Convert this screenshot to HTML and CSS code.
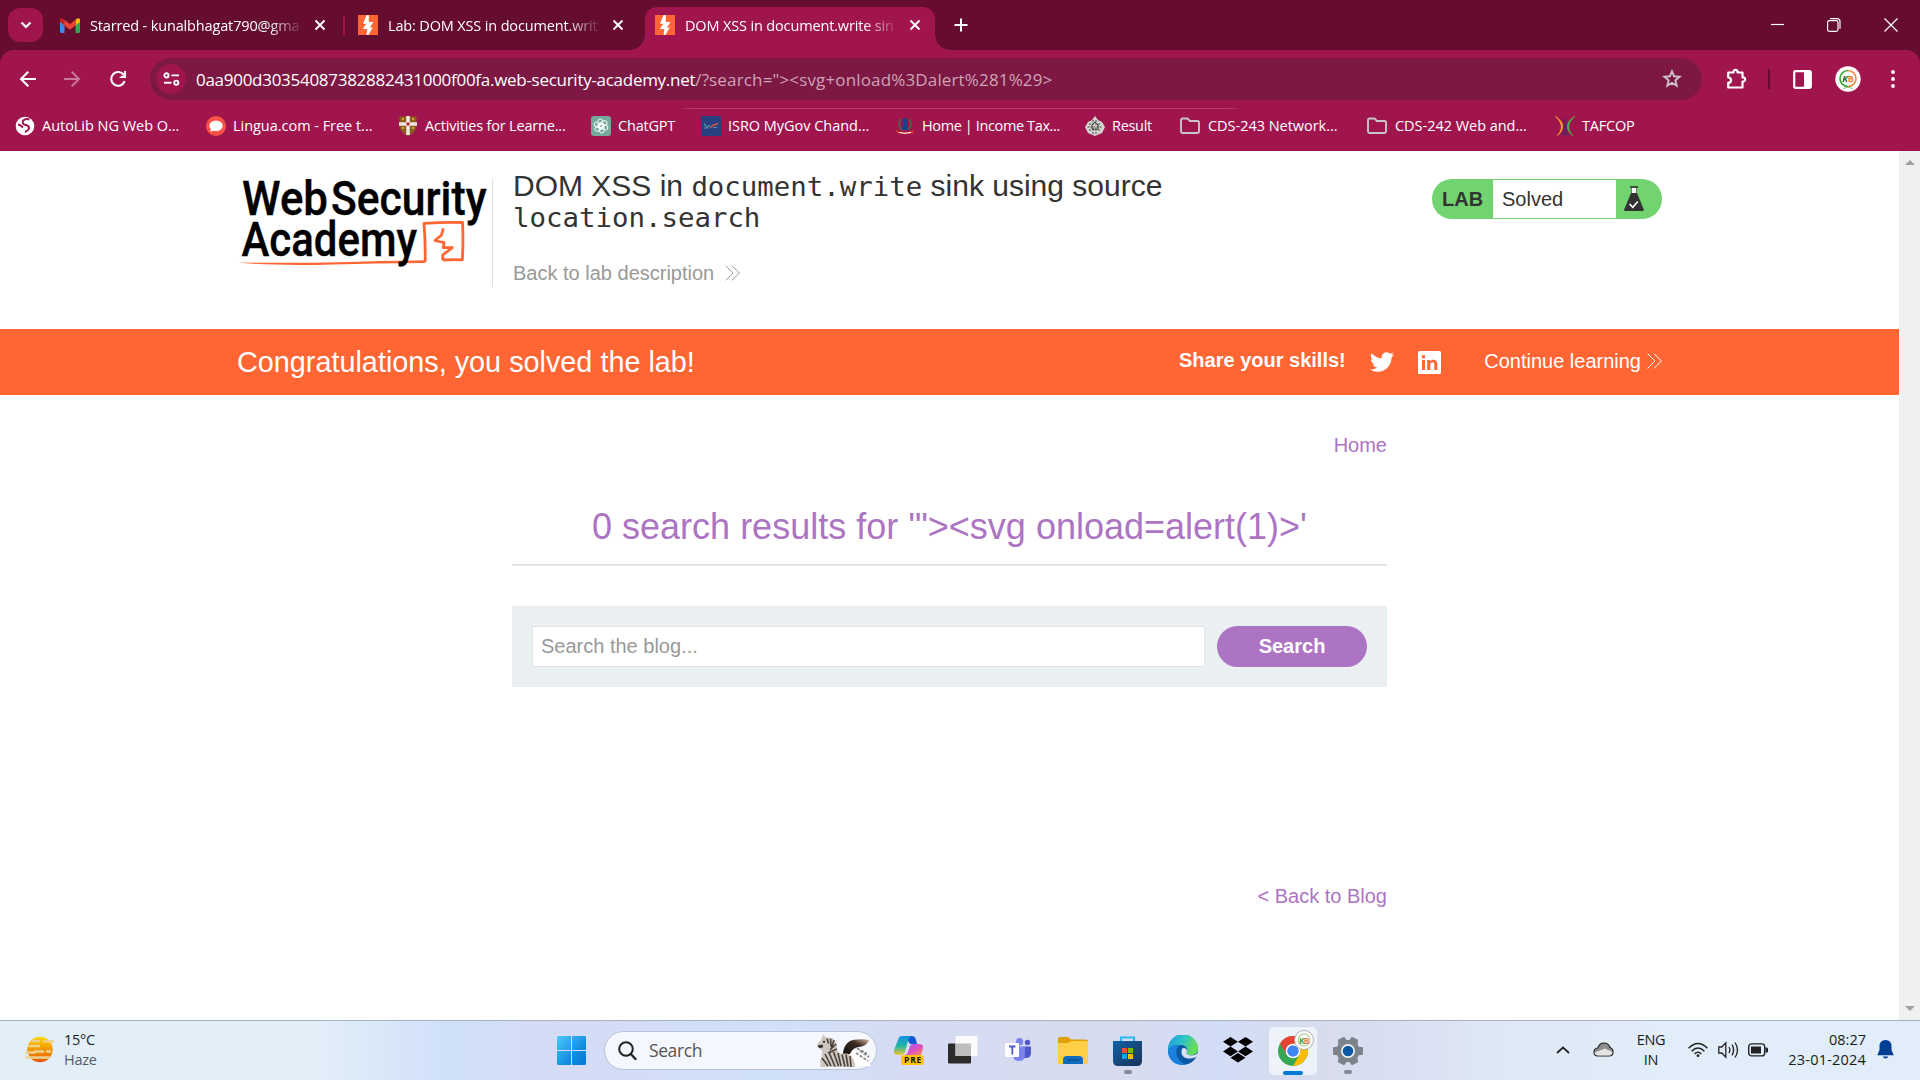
FILE: index.html
```html
<!DOCTYPE html>
<html lang="en">
<head>
<meta charset="utf-8">
<title>DOM XSS in document.write sink using source location.search</title>
<link rel="stylesheet" href="styles.css">
</head>
<body>
<svg class="defs" width="0" height="0" aria-hidden="true">
  <defs>
    <symbol id="close" viewBox="0 0 12 12"><path d="M1.5 1.5l9 9M10.500 1.5l-9 9" fill="none" stroke="#fff" stroke-width="1.900"/></symbol>
    <symbol id="burp" viewBox="0 0 20 20"><path fill="#ff6633" d="M0 0h20v20H0z"/><path fill="#fff" d="M8.600 0h2.200v7h4.700l-3.600 5.500h2.900L10.400 20H8.600l.7-6H4.700l3.700-5.300H5z"/></symbol>
    <symbol id="folder" viewBox="0 0 22 18"><path d="M2 3a1.500 1.500 0 0 1 1.500-1.500h5L11 4h7.500A1.500 1.500 0 0 1 20 5.500v9a1.500 1.500 0 0 1-1.500 1.500h-15A1.500 1.500 0 0 1 2 14.500z" fill="none" stroke="#c7c7c7" stroke-width="1.900"/></symbol>
    <symbol id="chevrons" viewBox="0 0 15 16"><path d="M.6.600L8 8 .6 15.400M7 .6L14.400 8 7 15.400" fill="none" stroke="currentColor" stroke-width="1"/></symbol>
  </defs>
</svg>

<header class="browser">
  <div class="tabstrip">
    <div class="tab-search"><svg width="12" height="8" viewBox="0 0 12 8"><path d="M1.500 1.500L6 6l4.500-4.500" fill="none" stroke="#fff" stroke-width="2.200"/></svg></div>
    <div class="tab tab-mail">
      <svg class="fav" width="20" height="15" viewBox="0 0 20 15"><path fill="#4285f4" d="M0 3h4.500v12H1.500A1.500 1.500 0 0 1 0 13.500z"/><path fill="#34a853" d="M15.500 3H20v10.500a1.500 1.500 0 0 1-1.500 1.500h-3z"/><path fill="#fbbc04" d="M15.500 1.500L18 .3c1.200-.3 2 .6 2 1.700v2l-4.500 3.500z"/><path fill="#c5221f" d="M0 4V2C0 .5 1.500-.2 2.800.6L4.500 2v5.500z"/><path fill="#ea4335" d="M4.500 1.800L10 6l5.500-4.200v5.700L10 11.700 4.500 7.500z"/></svg>
      <span class="tab-title">Starred - kunalbhagat790@gma</span>
      <svg class="x" width="12" height="12"><use href="#close"/></svg>
    </div>
    <i class="tab-sep"></i>
    <div class="tab tab-lab">
      <svg class="fav" width="20" height="20"><use href="#burp"/></svg>
      <span class="tab-title">Lab: DOM XSS in document.writ</span>
      <svg class="x" width="12" height="12"><use href="#close"/></svg>
    </div>
    <div class="tab tab-active">
      <svg class="fav" width="20" height="20"><use href="#burp"/></svg>
      <span class="tab-title">DOM XSS in document.write sin</span>
      <svg class="x" width="12" height="12"><use href="#close"/></svg>
    </div>
    <svg class="new-tab" width="14" height="14" viewBox="0 0 14 14"><path d="M7 .5v13M.5 7h13" stroke="#fff" stroke-width="2"/></svg>
    <div class="window-buttons">
      <svg width="14" height="14" viewBox="0 0 14 14"><path d="M1 6.500h13" stroke="#fff" stroke-width="1.200"/></svg>
      <svg width="14" height="14" viewBox="0 0 14 14"><rect x=".6" y="2.600" width="10.400" height="10.800" rx="1.800" fill="none" stroke="#fff" stroke-width="1.200"/><path d="M3 .7h7a3 3 0 0 1 3 3v7" fill="none" stroke="#fff" stroke-width="1.200"/></svg>
      <svg width="14" height="14" viewBox="0 0 14 14"><path d="M.5.500l13 13M13.500.5l-13 13" stroke="#fff" stroke-width="1.200"/></svg>
    </div>
  </div>

  <div class="toolbar">
    <svg class="nav-back" width="18" height="18" viewBox="0 0 18 18"><path d="M17 9H2.500M9.300 1.700L2 9l7.300 7.300" fill="none" stroke="#fff" stroke-width="2.100"/></svg>
    <svg class="nav-forward" width="18" height="18" viewBox="0 0 18 18"><path d="M1 9h14.500M8.700 1.700L16 9l-7.300 7.300" fill="none" stroke="#c7799b" stroke-width="2"/></svg>
    <svg class="nav-reload" width="18" height="18" viewBox="0 0 18 18"><path d="M15.600 11.200A6.900 6.900 0 1 1 15 5.300" fill="none" stroke="#fff" stroke-width="2.100"/><path d="M17 1v7h-7l2.500-2.200H15V1z" fill="#fff"/></svg>
    <div class="omnibox">
      <span class="site-info"><svg width="17" height="14" viewBox="0 0 17 14" fill="none" stroke="#fff" stroke-width="1.900"><circle cx="3.500" cy="3.400" r="2.100"/><path d="M8.500 3.400H16M1 10.700h7.500"/><circle cx="13.300" cy="10.700" r="2.100"/></svg></span>
      <span class="url"><span class="url-host">0aa900d30354087382882431000f00fa.web-security-academy.net</span><span class="url-path">/?search="&gt;&lt;svg+onload%3Dalert%281%29&gt;</span></span>
      <svg class="star" width="20" height="20" viewBox="0 0 20 20"><path d="M10 2.300l2.100 5 5.500.5-4.200 3.600 1.300 5.400-4.700-2.900-4.700 2.900 1.300-5.400-4.200-3.600 5.500-.5z" fill="none" stroke="#cfc0c8" stroke-width="1.900"/></svg>
    </div>
    <svg class="puzzle" width="22" height="22" viewBox="0 0 22 22"><path d="M2.200 4.500h5.300c-.5-3.500 4.500-3.500 4 0h5v5c3.500-.6 3.500 4.500 0 4v6H2.200v-4.700c3.800-.3 3.800-5 0-5.400z" fill="none" stroke="#fff" stroke-width="2.200" stroke-linejoin="round"/></svg>
    <i class="toolbar-sep"></i>
    <svg class="side-panel" width="19" height="19" viewBox="0 0 19 19"><rect x="1.200" y="1.200" width="16.600" height="16.600" rx="1.500" fill="none" stroke="#fff" stroke-width="2.200"/><path fill="#fff" d="M11 1h7v17h-7z"/></svg>
    <svg class="avatar" width="26" height="26" viewBox="0 0 26 26"><circle cx="13" cy="13" r="12.700" fill="#fff"/><path d="M13 4.500a8 8 0 0 0 0 16" fill="none" stroke="#3aa935" stroke-width="1.600"/><path d="M13 4.500a8 8 0 0 1 0 16" fill="none" stroke="#f08a3c" stroke-width="1.600"/><text x="7.200" y="16" font-size="9" font-weight="700" font-style="italic" fill="#176b3a">K</text><text x="12.800" y="16" font-size="9" font-weight="700" fill="#ef7f2d">B</text><path d="M8 23q5-3.500 10 0" fill="none" stroke="#8bc48a"/></svg>
    <svg class="kebab" width="4" height="20" viewBox="0 0 4 20" fill="#fff"><circle cx="2" cy="3" r="1.900"/><circle cx="2" cy="10" r="1.900"/><circle cx="2" cy="17" r="1.900"/></svg>
  </div>

  <nav class="bookmarks">
    <a class="bm bm-autolib"><svg width="20" height="20" viewBox="0 0 20 20"><circle cx="10" cy="10" r="9.300" fill="#fff"/><path d="M14.500 3.500C10 2 6 5 8.500 8c1.500 1.600 5 .5 5.500 3.500.3 2-1.500 3.300-4 4.500M3 8.500c2 0 3 1.500 5 3" fill="none" stroke="#a0154e" stroke-width="2"/></svg><span>AutoLib NG Web O...</span></a>
    <a class="bm bm-lingua"><svg width="20" height="20" viewBox="0 0 20 20"><circle cx="10" cy="10" r="10" fill="#fa5246"/><ellipse cx="10" cy="9.700" rx="6.700" ry="5.200" fill="#fff"/><path fill="#fff" d="M5 12l-.5 4 4-2z"/></svg><span>Lingua.com - Free t...</span></a>
    <a class="bm bm-activities"><svg width="20" height="20" viewBox="0 0 20 20"><path fill="#8b5e1d" d="M1.500.5h17v8c0 6-4 9.500-8.500 11.500C5.500 18 1.500 14.500 1.500 8.500z"/><path d="M10 0v19M1 8h18" stroke="#efe4df" stroke-width="3.600"/><path d="M4 3h2M14 3h2M4 12h2M14 12h2" stroke="#dca43b" stroke-width="2"/><path fill="#b0243c" d="M8.500 6.500h3v3h-3z"/></svg><span>Activities for Learne...</span></a>
    <a class="bm bm-chatgpt"><svg width="20" height="20" viewBox="0 0 20 20"><rect width="20" height="20" rx="3" fill="#74aa9c"/><g fill="none" stroke="#fff" stroke-width=".9"><rect x="7" y="3" width="4.500" height="9" rx="2.200"/><rect x="7" y="3" width="4.500" height="9" rx="2.200" transform="rotate(60 10 10)"/><rect x="7" y="3" width="4.500" height="9" rx="2.200" transform="rotate(120 10 10)"/><rect x="7" y="3" width="4.500" height="9" rx="2.200" transform="rotate(180 10 10)"/><rect x="7" y="3" width="4.500" height="9" rx="2.200" transform="rotate(240 10 10)"/><rect x="7" y="3" width="4.500" height="9" rx="2.200" transform="rotate(300 10 10)"/></g></svg><span>ChatGPT</span></a>
    <a class="bm bm-isro"><svg width="20" height="20" viewBox="0 0 20 20"><path fill="#27407f" d="M0 0h20v20H0z"/><path d="M3 7.500l3 4 3-2.500" stroke="#4fa3a5" fill="none" stroke-width="1.200"/><path d="M9 12l3-3M12 9.500l5-2" stroke="#d9544f" stroke-width="1.400"/><path d="M3 12h4M12 11.500h4" stroke="#6c82bb"/></svg><span>ISRO MyGov Chand...</span></a>
    <a class="bm bm-income"><svg width="20" height="20" viewBox="0 0 20 20"><path fill="#17408f" d="M8 5h4l1 9H7z"/><circle cx="10" cy="4.500" r="2.300" fill="#17408f"/><path d="M6 3C3 6 3.500 11 7 13.500M14 3c3 3 2.500 8-1 10.500" fill="none" stroke="#39703b" stroke-width="1.600"/><path d="M1 14q9 5 18 0l-1 3q-8 2.500-16 0z" fill="#e33a2e"/><path d="M4 16.400q6 1.800 12 0" stroke="#fff" fill="none"/></svg><span>Home | Income Tax...</span></a>
    <a class="bm bm-result"><svg width="20" height="20" viewBox="0 0 20 20"><path fill="#d4d4d0" d="M10 0l3 4 4 2 3 5-3 6-7 3-7-3-3-6 3-5 4-2z"/><path d="M4 8h12M2.500 11h15M4 14h12M7 5h6M7 17h6" stroke="#454545" stroke-dasharray="2 1" stroke-width="1.200"/><path d="M7 9l3-3 3 3v4H7z" fill="none" stroke="#333"/></svg><span>Result</span></a>
    <a class="bm bm-cds243"><svg width="22" height="18"><use href="#folder"/></svg><span>CDS-243 Network...</span></a>
    <a class="bm bm-cds242"><svg width="22" height="18"><use href="#folder"/></svg><span>CDS-242 Web and...</span></a>
    <a class="bm bm-tafcop"><svg width="20" height="20" viewBox="0 0 20 20"><circle cx="10" cy="4.500" r="2" fill="#6a1f63"/><path fill="#6a1f63" d="M8 7.500h4l.5 7L14 19.500H6l1.500-5z"/><path d="M.5.500C9 6 10 13 2.500 19.500 8.500 13 7.500 7 .5.500z" fill="#f5a02a" stroke="#f5a02a" stroke-width="1"/><path d="M19.500.5C11 6 10 13 17.500 19.500 11.500 13 12.500 7 19.500.5z" fill="#4db748" stroke="#4db748" stroke-width="1"/></svg><span>TAFCOP</span></a>
  </nav>
</header>

<div class="viewport">
  <main class="page">
    <section class="lab-header">
      <svg class="logo" width="255" height="108" viewBox="0 0 255 108">
        <path fill="#ff6633" d="M.5 83.500q60 .8 100-.2 40-1.300 88-2v2.600q-50 .4-92 1.500-60 1.600-96-1.900z"/>
        <path d="M188.200 82.500q.3-19-1.200-38.200 20-1.200 38.500-.8 1 18-.2 37.300-10-.3-19.600.2" fill="none" stroke="#ff6633" stroke-width="2.800" stroke-linejoin="round"/>
        <path d="M206.300 49.300L204.500 56l-6.500 5.500q5 1.500 9 1.800l-.7 5.400h9l-9.600 7.300v5" fill="none" stroke="#ff6633" stroke-width="2.800" stroke-linejoin="round"/>
        <g font-family="Roboto, sans-serif" font-size="47.500" font-weight="500" fill="#000" stroke="#000" stroke-width=".4">
          <text x="5" y="36" textLength="86" lengthAdjust="spacingAndGlyphs">Web</text>
          <text x="94" y="36" textLength="155.500" lengthAdjust="spacingAndGlyphs">Security</text>
          <text x="4.500" y="76.700" textLength="175.500" lengthAdjust="spacingAndGlyphs">Academy</text>
        </g>
      </svg>
      <div class="lab-title">
        <h2>DOM XSS in <code>document.write</code> sink using source <code>location.search</code></h2>
        <a class="back-link">Back to lab description <svg width="15" height="16"><use href="#chevrons"/></svg></a>
      </div>
      <div class="lab-status">
        <b>LAB</b><span>Solved</span>
        <svg width="20" height="26" viewBox="0 0 20 26"><path d="M6 1h8" stroke="#333332" stroke-width="1.600"/><path d="M7.500 2v6h5V2" fill="#fff" stroke="#333332" stroke-opacity=".55" stroke-width="1"/><path d="M7 7h6l6.800 16.500q.4 1.500-1.400 1.500H1.600Q-.2 25 .2 23.500z" fill="#333332"/><path d="M5.500 18l3.300 3.300 5-5.800" stroke="#fff" stroke-width="1.600" fill="none"/></svg>
      </div>
    </section>

    <section class="banner">
      <h4>Congratulations, you solved the lab!</h4>
      <span class="share">Share your skills!</span>
      <svg class="twitter" width="24" height="24" viewBox="0 0 24 24"><path fill="#fff" d="M23.950 4.570a10 10 0 0 1-2.820.77 4.960 4.960 0 0 0 2.160-2.720c-.95.550-2 .95-3.130 1.180a4.920 4.920 0 0 0-8.380 4.480C7.690 8.100 4.070 6.130 1.640 3.160a4.930 4.930 0 0 0 1.520 6.570 4.900 4.900 0 0 1-2.230-.61v.06a4.920 4.920 0 0 0 3.950 4.830 5 5 0 0 1-2.210.08 4.940 4.940 0 0 0 4.600 3.420A9.870 9.870 0 0 1 0 19.540a13.990 13.990 0 0 0 7.550 2.210c9.050 0 14-7.500 14-13.980 0-.21 0-.42-.02-.63a9.940 9.940 0 0 0 2.460-2.550z"/></svg>
      <svg class="linkedin" width="23" height="23" viewBox="0 0 23 23"><rect width="23" height="23" rx="1.500" fill="#fff"/><path fill="#ff6633" d="M4 9h3v10H4zM4 4.300h3v3H4zM9.200 9H12v1.500c1.800-2.700 7.300-2.300 7.300 2.500v6h-3v-5.500c0-3-4-2.700-4 0V19H9.200z"/></svg>
      <a class="continue">Continue learning <svg width="15" height="16"><use href="#chevrons"/></svg></a>
    </section>

    <section class="blog">
      <a class="home">Home</a>
      <h1>0 search results for '"&gt;&lt;svg onload=alert(1)&gt;'</h1>
      <form class="search">
        <input type="text" placeholder="Search the blog...">
        <button type="button">Search</button>
      </form>
      <a class="back-blog">&lt; Back to Blog</a>
    </section>
  </main>
  <div class="scrollbar"><i class="up"></i><i class="down"></i></div>
</div>

<footer class="taskbar">
  <div class="weather">
    <svg width="30" height="28" viewBox="0 0 30 28"><defs><linearGradient id="sun" x1="0" y1="0" x2="0" y2="1"><stop offset="0" stop-color="#ffd400"/><stop offset="1" stop-color="#e65a00"/></linearGradient></defs><circle cx="15" cy="13.500" r="12.700" fill="url(#sun)"/><path d="M8 5h6M19 5.500h9M4 10h10M10 15.500h8M22 15.500h3M1 16.500h9M1 21.500h23" stroke="#ecd191" stroke-width="2.400" stroke-linecap="round"/></svg>
    <p><span>15°C</span><span class="dim">Haze</span></p>
  </div>
  <div class="apps">
    <svg class="start" width="29" height="29" viewBox="0 0 29 29"><defs><linearGradient id="win" x1="0" y1="0" x2="1" y2="1"><stop offset="0" stop-color="#4cc9fb"/><stop offset=".6" stop-color="#148fe0"/><stop offset="1" stop-color="#0474d2"/></linearGradient></defs><path fill="url(#win)" d="M1 0h13v14H0V1zM15 0h13l1 1v13H15zM0 15h14v14H1l-1-1zM15 15h14v13l-1 1H15z"/></svg>
    <div class="task-search">
      <svg width="19" height="20" viewBox="0 0 19 20"><circle cx="8" cy="8" r="6.800" fill="none" stroke="#222" stroke-width="2"/><path d="M12.800 13l4.700 5" stroke="#222" stroke-width="2.400" stroke-linecap="round"/></svg>
      <span>Search</span>
      <svg class="zebra" width="54" height="34" viewBox="0 0 54 34">
        <defs><linearGradient id="wing" x1="0" y1="1" x2="1" y2="0"><stop offset="0" stop-color="#15100e"/><stop offset=".6" stop-color="#3a2a22"/><stop offset="1" stop-color="#d9b9a0"/></linearGradient></defs>
        <path fill="#fff" d="M31 21q5-7 11-7l12 18H37z"/>
        <path d="M40 14.500l10 5M39 19l12 8M43 17l9 6" stroke="#8b8582" stroke-width="1.700" stroke-dasharray="3 1.500"/>
        <path fill="url(#wing)" d="M26 20q1-14 14-14.500 6-.8 12 .5-2 6-10 7-7 1-9 7z"/>
        <path fill="#cfc6bf" d="M3 33q1-3 0-7 3-4 2-9L1 13q-2-3 3-7L6 .8l3 2.700 7 1q5 5 4 11 1 3 5 4.500 7-2 10 3 3 4 3 10z"/>
        <path d="M10 4.500l1.500 5M13.500 4.500l.5 8M17 6l-2.500 8M19 10l-6 6M20 15l-9 4M5 24l6 8M8 20l6 12M12 18.500l6 14M16.500 18l5 14M21 19l3 13M25 20.500l3 12M29 20.500l2 12M33 22l1 11" stroke="#4a403b" stroke-width="1.600" fill="none"/>
        <path fill="#3a322e" d="M.5 11.500l5-1 .8 2.800-4 1z"/><circle cx="7" cy="7.800" r="1" fill="#111"/>
      </svg>
    </div>
    <svg class="copilot" width="30" height="29" viewBox="0 0 30 29"><defs><linearGradient id="cpa" x1="0" y1="0" x2="0" y2="1"><stop offset="0" stop-color="#1490e8"/><stop offset=".55" stop-color="#27b99b"/><stop offset="1" stop-color="#f4c430"/></linearGradient><linearGradient id="cpb" x1="0" y1="0" x2="1" y2="1"><stop offset="0" stop-color="#9b5cff"/><stop offset=".5" stop-color="#d94fc5"/><stop offset="1" stop-color="#ff8a5c"/></linearGradient></defs><path fill="#1557d6" d="M11 0h7q3 0 4 4l1 4h-7z"/><path fill="url(#cpa)" d="M8 0h10q-3 1-4 5l-3 11q-1 3-4 3H4q-5 0-4-5L4 4q1-4 4-4z"/><path fill="url(#cpb)" d="M19 8h6q5 0 4 5l-2 6H10q3 0 4-3l2-6q1-2 3-2z"/><rect x="7" y="19" width="23" height="10" rx="3" fill="#ffc40c"/><text x="10" y="27.300" font-size="8.500" font-weight="700" fill="#111" textLength="17">PRE</text></svg>
    <svg class="taskview" width="30" height="28" viewBox="0 0 30 28"><rect y="7.500" width="23" height="20" rx="1" fill="#2b2b2a"/><rect x="7.500" width="22" height="20" rx="1" fill="#fafafa"/><path fill="#bdbdbd" d="M7.500 7.500H23V20H7.500z"/></svg>
    <svg class="teams" width="27" height="24" viewBox="0 0 27 24"><circle cx="14.500" cy="3.800" r="3.700" fill="#7b83eb"/><circle cx="22.500" cy="4.500" r="2.700" fill="#5059c9"/><path fill="#5059c9" d="M18 8.500h8v6.500q0 5-5 5h-3z"/><path fill="#7b83eb" d="M8 8.500h12V17q0 6-6 6t-6-6z"/><rect y="5" width="14" height="14" rx="1" fill="#fff"/><path d="M4 8.500h6.500M7.300 8.500v8" stroke="#5059c9" stroke-width="1.800"/></svg>
    <svg class="explorer" width="30" height="27" viewBox="0 0 30 27"><path fill="#e0a000" d="M0 2q0-2 2-2h8l3 2.500h15q2 0 2 2V10H0z"/><path fill="#ffcf48" d="M0 6h10l3-2h17v22q0 1-1 1H1q-1 0-1-1z"/><path fill="#0f6cbd" d="M5 27v-4q0-4 4-4h12q4 0 4 4v4z"/><path d="M9 23h12" stroke="#0a4f8f" stroke-width="1.500"/></svg>
    <svg class="store" width="29" height="30" viewBox="0 0 29 30"><defs><linearGradient id="st" x1="0" y1="0" x2="1" y2="1"><stop offset="0" stop-color="#0f62a8"/><stop offset="1" stop-color="#1b3358"/></linearGradient></defs><path d="M8 6V1.500h13V6" fill="none" stroke="#2bb8f0" stroke-width="2.200"/><path fill="url(#st)" d="M0 5h29v20q0 5-5 5H5q-5 0-5-5z"/><path fill="#f25022" d="M9 12h5v5H9z"/><path fill="#7fba00" d="M15 12h5v5h-5z"/><path fill="#00a4ef" d="M9 18h5v5H9z"/><path fill="#ffb900" d="M15 18h5v5h-5z"/></svg>
    <svg class="edge" width="30" height="30" viewBox="0 0 30 30"><defs><linearGradient id="eg" x1="0" y1="0" x2="1" y2=".3"><stop offset="0" stop-color="#1b9de2"/><stop offset=".55" stop-color="#2fc3c6"/><stop offset="1" stop-color="#66dd55"/></linearGradient></defs><circle cx="15" cy="15" r="15" fill="#0c59a4"/><path fill="url(#eg)" d="M0 14A15 15 0 0 1 30 14c0 5-5 7-10 6-2-1-2-2-1-4 1-3-2-6-6-6C6 10 1 13 0 17z"/><path fill="#1a82dc" d="M0 16c1-5 6-7 12-6-4 2-5 8-2 13 2 4 6 6 8 6.500C8 32 0 25 0 16z"/><path fill="#d9e1f7" d="M14 14c-2 6 2 10 8 9.500 3 0 6-1 7.500-2.500l.8-4c-1.800 3-6 4-10 3-2-1-2-2-1.300-3.500 0-3-3-4.500-5-2.500z"/></svg>
    <svg class="dropbox" width="30" height="26" viewBox="0 0 30 26"><path d="M7.500 0L15 4.800 7.500 9.600 0 4.800zM22.500 0L30 4.800l-7.500 4.800L15 4.800zM7.500 9.600l7.500 4.800-7.500 4.800L0 14.400zM22.500 9.600l7.500 4.800-7.500 4.800-7.500-4.800zM15 16l7.500 4.800L15 25.600l-7.500-4.800z"/></svg>
    <div class="chrome-tile">
      <svg width="48" height="48" viewBox="0 0 48 48"><circle cx="24" cy="24" r="15" fill="#34a853"/><path fill="#ea4335" d="M24 24L11 16.500A15 15 0 0 1 37 16.500z"/><path fill="#ea4335" d="M11 16.500l6.500 11.300L24 24l13-7.500z"/><path fill="#fbbc04" d="M24 16.500h13A15 15 0 0 1 24 39l6.500-11.200z"/><circle cx="24" cy="24" r="7.300" fill="#fff"/><circle cx="24" cy="24" r="5.800" fill="#4285f4"/><circle cx="35" cy="13" r="9.500" fill="#fff" stroke="#999" stroke-width=".8"/><circle cx="35" cy="13" r="6" fill="none" stroke="#b8d8a8" stroke-width="1.400"/><text x="30" y="16.500" font-size="8.500" font-weight="700" fill="#36a24a">K</text><text x="34.800" y="16.500" font-size="8.500" font-weight="700" fill="#ef7f4d">B</text><rect x="14" y="44" width="20" height="4" rx="2" fill="#0078d4"/></svg>
    </div>
    <svg class="settings" width="30" height="30" viewBox="0 0 30 30"><path fill="#7c838a" stroke="#7c838a" stroke-width="2" stroke-linejoin="round" d="M11 2l2 3h4l2-3 5 2.500-.5 4 2.200 3.500H29v6h-3.300l-2.200 3.500.5 4L19 28l-2-3h-4l-2 3-5-2.500.5-4L4.300 18H1v-6h3.300l2.200-3.500-.5-4z"/><circle cx="15" cy="15" r="7" fill="#f3f3f3"/><circle cx="15" cy="15" r="5.300" fill="#0c59a4"/></svg>
    <i class="running run-store"></i>
    <i class="running run-settings"></i>
  </div>
  <div class="tray">
    <svg class="chev" width="14" height="8" viewBox="0 0 14 8"><path d="M1 7l6-5.500L13 7" fill="none" stroke="#222" stroke-width="1.700"/></svg>
    <svg class="cloud" width="21" height="15" viewBox="0 0 21 15"><path d="M5 14q-4 0-4-4 0-3.500 3.800-4Q6.500 1 11 1t6 4.500q3 .8 3 4.500 0 4-4 4z" fill="#8d8d8d" stroke="#222" stroke-width="1.200"/><path fill="#e3e3e3" d="M5 13.400q-3.200-.2-3.400-3L12 6.500l7.400 3.500q0 3.300-3.400 3.400z"/></svg>
    <p class="lang"><span>ENG</span><span>IN</span></p>
    <svg class="wifi" width="20" height="16" viewBox="0 0 20 16" fill="none" stroke="#222" stroke-width="1.500"><path d="M.6 6.200q9.400-9.500 18.800 0M3.600 9.200q6.400-6.300 12.800 0M6.600 12q3.400-3.400 6.800 0"/><circle cx="10" cy="13.700" r="1.400" fill="#222" stroke="none"/></svg>
    <svg class="sound" width="21" height="18" viewBox="0 0 21 18" fill="none" stroke="#222" stroke-width="1.300"><path d="M.8 6h3l4-4.200v14.400l-4-4.200h-3zM11 6q1.800 3 0 6M14 3.700q3.300 5.300 0 10.600M17 1.500q5 7.500 0 15"/></svg>
    <svg class="battery" width="20" height="14" viewBox="0 0 20 14"><rect x=".7" y=".9" width="16" height="12" rx="3" fill="none" stroke="#222" stroke-width="1.400"/><path fill="#222" d="M3 3.500h10v7H3zM17.500 4.500H19q1 0 1 1.500v2q0 1.500-1 1.500h-1.500z"/></svg>
    <p class="clock"><span>08:27</span><span>23-01-2024</span></p>
    <svg class="bell" width="17" height="19" viewBox="0 0 17 19"><path fill="#003e92" d="M8.500 0q6 0 6 6.500V10l2 4.500v.8H.5v-.8l2-4.500V6.500Q2.500 0 8.500 0zM5.800 16.500h5.400q-.5 2-2.700 2t-2.700-2z"/></svg>
  </div>
</footer>
</body>
</html>
```
FILE: styles.css
```css
* { box-sizing: border-box; }
body { margin: 0; width: 1920px; height: 1080px; overflow: hidden; background: #fff; font-family: "Liberation Sans", Arial, sans-serif; display: flex; flex-direction: column; }
svg { display: block; flex: none; }
h1, h2, h4, p { margin: 0; font-weight: 400; }
.defs { position: absolute; }

/* Browser frame */
.browser { height: 151px; flex: none; background: #650c2f; color: #fff; font-family: "Open Sans", "Noto Sans", sans-serif; }
.tabstrip { height: 50px; display: flex; align-items: center; }
.tab-search { width: 35px; height: 34px; margin-left: 8px; border-radius: 12px; background: #a0154e; display: flex; align-items: center; justify-content: center; }
.tab { display: flex; align-items: center; height: 43px; font-size: 14.5px; letter-spacing: -.15px; }
.tab-title { width: 212px; margin-left: 10px; white-space: nowrap; mask-image: linear-gradient(90deg, #000 178px, transparent 214px); }
.tab .x { margin-left: 12px; }
.tab-mail { margin-left: 17px; width: 283px; }
.tab-sep { width: 2px; height: 19px; background: #a0154e; }
.tab-lab { margin-left: 13px; width: 287px; }
.tab-active { align-self: flex-end; width: 290px; height: 43px; padding: 0 0 7px 10px; border-radius: 12px 12px 0 0; background: #a0154e; position: relative; }
.tab-active::before, .tab-active::after { content: ""; position: absolute; bottom: 0; width: 15px; height: 15px; }
.tab-active::before { left: -15px; background: radial-gradient(circle at 0 0, transparent 14.500px, #a0154e 15px); }
.tab-active::after { right: -15px; background: radial-gradient(circle at 100% 0, transparent 14.500px, #a0154e 15px); }
.new-tab { margin-left: 19px; }
.window-buttons { margin-left: auto; padding-right: 22px; display: flex; gap: 43px; }

.toolbar { height: 58px; padding: 0 25px 0 19px; display: flex; align-items: center; background: #a0154e; border-radius: 14px 14px 0 0; }
.nav-back, .nav-forward, .nav-reload { margin-top: -1px; }
.nav-forward { margin-left: 26px; }
.nav-reload { margin-left: 28px; }
.omnibox { width: 1552px; height: 42px; margin-left: 23px; padding-left: 6px; padding-right: 20px; border-radius: 21px; background: #7c1843; display: flex; align-items: center; }
.site-info { width: 30px; height: 30px; border-radius: 50%; background: #a0154e; display: flex; align-items: center; justify-content: center; }
.url { margin-left: 10px; font-size: 17px; white-space: nowrap; }
.url-host { letter-spacing: -.28px; }
.url-path { color: #cfa3b6; letter-spacing: .15px; }
.star { margin-left: auto; }
.puzzle { margin-left: 24px; }
.toolbar-sep { width: 2px; height: 20px; margin-left: 20px; background: #650c2f; }
.side-panel { margin-left: 23px; }
.avatar { margin-left: 23px; }
.kebab { margin-left: 30px; }

.bookmarks { height: 43px; padding: 0 0 8px 15px; display: flex; align-items: center; background: linear-gradient(90deg, transparent 680px, #b33b6c 690px, #b33b6c 1230px, transparent 1240px) 0 0 / 100% 1px no-repeat #a0154e; font-size: 14.500px; letter-spacing: -.03px; }
.bm { display: flex; align-items: center; gap: 7px; white-space: nowrap; flex: none; }
.bm-autolib { width: 191px; }
.bm-lingua { width: 192px; }
.bm-activities { width: 193px; letter-spacing: -.18px; }
.bm-chatgpt { width: 110px; letter-spacing: -.2px; }
.bm-isro { width: 194px; }
.bm-income { width: 190px; letter-spacing: -.38px; }
.bm-result { width: 94px; letter-spacing: -.3px; }
.bm-cds243 { width: 187px; }
.bm-cds242 { width: 189px; }
.bm-tafcop { letter-spacing: -.2px; }

/* Page */
.viewport { height: 869px; display: flex; }
.page { width: 1899px; }
.lab-header { height: 178px; padding: 28px 237px 0; display: flex; align-items: flex-start; }
.lab-title { position: relative; margin-left: 0; padding-left: 21px; width: 780px; color: #333332; }
.lab-title::before { content: ""; position: absolute; left: 0; top: 0; width: 1px; height: 108px; background: #e0e0e0; }
.lab-title h2 { margin-top: -8px; width: 700px; font-size: 30px; line-height: 30px; }
.lab-title code { font-family: "DejaVu Sans Mono", monospace; font-size: 27.400px; line-height: 30px; }
.back-link { margin-top: 28px; display: flex; align-items: center; gap: 11px; font-size: 20px; line-height: 24px; color: #999; }
.lab-status { margin-left: auto; width: 230px; height: 40px; padding: 1px 0; border-radius: 20px; background: #72d371; color: #333332; display: flex; align-items: center; font-size: 20px; }
.lab-status b { width: 61px; padding-left: 10px; line-height: 38px; }
.lab-status span { width: 123px; height: 38px; padding-left: 9px; background: #fff; line-height: 38px; }
.lab-status svg { margin-left: 8px; }

.banner { height: 66px; padding: 0 237px; background: #ff6633; color: #fff; display: flex; align-items: center; font-size: 20px; }
.banner h4 { width: 942px; padding-top: 1px; font-size: 28.800px; }
.share { width: 191px; font-weight: 700; padding-bottom: 4px; }
.linkedin { margin-left: 24px; }
.continue { margin-left: auto; padding-bottom: 2px; display: flex; align-items: center; gap: 6px; }

.blog { width: 875px; margin-left: 512px; display: flex; flex-direction: column; color: #ad74c3; font-size: 20px; }
.home { align-self: flex-end; margin-top: 38px; line-height: 24px; }
.blog h1 { height: 109px; padding-top: 49px; border-bottom: 2px solid #e4e4e4; font-size: 36px; line-height: 42px; text-align: center; white-space: nowrap; }
.search { margin-top: 40px; height: 81px; padding: 20px; display: flex; justify-content: space-between; background: #eaeff2; }
.search input { width: 673px; height: 41px; padding: 0 8px; border: 1px solid #e4e4e4; border-radius: 0; outline: 0; font: 20px "Liberation Sans", Arial, sans-serif; }
.search input::placeholder { color: #999; }
.search button { width: 150px; height: 41px; border: 0; border-radius: 20.500px; background: #ad74c3; color: #fff; font: 700 20px "Liberation Sans", Arial, sans-serif; }
.back-blog { align-self: flex-end; margin-top: 197px; line-height: 24px; }

.scrollbar { width: 21px; padding: 9px 6px; background: #f0f0f0; display: flex; flex-direction: column; justify-content: space-between; }
.scrollbar i { border: 5px solid transparent; width: 0; height: 0; }
.scrollbar .up { border-top: 0; border-bottom-color: #a0a0a0; }
.scrollbar .down { border-bottom: 0; border-top-color: #a0a0a0; }

/* Taskbar */
.taskbar { height: 60px; border-top: 1px solid #a9b1c0; background: linear-gradient(90deg, #e2eef8 0, #e2eef8 320px, #d0e0fa 450px, #d5dcf5 540px, #d4dcf6 620px, #d1e1fa 770px, #d5dcf3 900px, #d8dbef 1120px, #d2ddf6 1220px, #d8dced 1330px, #d9e0f3 1400px, #dfe8f5 1500px, #e1edf8 1650px, #e1edf8 100%); display: flex; align-items: center; color: #1b1b1b; font-family: "Open Sans", "Noto Sans", sans-serif; font-size: 14.500px; letter-spacing: -.3px; }
.taskbar p { display: flex; flex-direction: column; line-height: 20px; padding-bottom: 1px; }
.dim { color: #565b61; }
.weather { width: 557px; padding-left: 25px; display: flex; align-items: center; gap: 9px; }
.weather svg { margin-top: -2px; }
.apps { width: 999px; height: 59px; display: flex; align-items: center; position: relative; }
.task-search { width: 273px; height: 39px; margin-left: 18px; padding: 0 5px 0 13px; border: 1px solid #b9c1d6; border-radius: 20px; background: #f4f7fd; display: flex; align-items: center; font-size: 17.500px; letter-spacing: -.4px; color: #555; }
.task-search span { margin-left: 12px; padding-bottom: 1px; }
.zebra { margin-left: auto; }
.copilot { margin-left: 17px; }
.taskview { margin-left: 24px; margin-top: -2px; }
.teams { margin-left: 27px; margin-top: -2px; }
.explorer { margin-left: 26px; }
.store { margin-left: 25px; }
.edge { margin-left: 26px; margin-top: -1px; }
.dropbox { margin-left: 25px; margin-top: -2px; }
.chrome-tile { width: 48px; height: 48px; margin-left: 16px; border-radius: 5px; background: #edf2fb; }
.settings { margin-left: 16px; }
.running { position: absolute; top: 49px; width: 8px; height: 4px; border-radius: 2px; background: #858a94; }
.run-store { left: 567px; }
.run-settings { left: 787px; }
.tray { display: flex; align-items: center; }
.tray > svg { margin-top: -2px; }
.cloud { margin-left: 23px; }
.lang { width: 40px; margin-left: 17px; align-items: center; }
.wifi { margin-left: 17px; }
.sound { margin-left: 10px; }
.battery { margin-left: 9px; }
.clock { width: 98px; align-items: flex-end; letter-spacing: .2px; }
.clock span:first-child { letter-spacing: 0; }
.bell { margin-left: 11px; }
```
